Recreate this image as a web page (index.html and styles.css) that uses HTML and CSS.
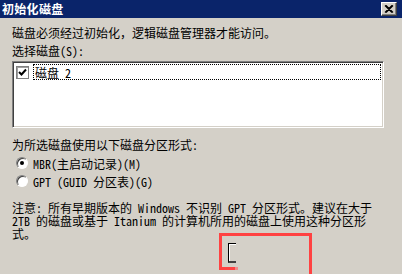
FILE: index.html
```html
<!DOCTYPE html>
<html lang="zh-CN">
<head>
<meta charset="utf-8">
<title>初始化磁盘</title>
<link rel="stylesheet" href="styles.css">
</head>
<body>
<div class="window">
  <div class="titlebar">
    <span class="title">初始化磁盘</span>
    <span class="close-btn">
      <svg width="10" height="8" viewBox="0 0 10 8"><path d="M1 0.5 L8 7.5 M2 0.5 L9 7.5 M8 0.5 L1 7.5 M9 0.5 L2 7.5" stroke="#000" stroke-width="1.2" fill="none"/></svg>
    </span>
  </div>
  <div class="content">
    <p class="line">磁盘必须经过初始化，逻辑磁盘管理器才能访问。</p>
    <p class="line">选择磁盘(S):</p>
    <div class="listbox">
      <div class="list-item">
        <span class="checkbox">
          <svg width="9" height="9" viewBox="0 0 9 9"><path d="M1 4 L3.5 6.5 L8 1.5" stroke="#000" stroke-width="2" fill="none"/></svg>
        </span>
        <span class="item-label">磁盘 2</span>
      </div>
    </div>
    <p class="line heading">为所选磁盘使用以下磁盘分区形式:</p>
    <div class="radio-row"><span class="radio checked"></span><span>MBR(主启动记录)(M)</span></div>
    <div class="radio-row"><span class="radio"></span><span>GPT (GUID 分区表)(G)</span></div>
    <p class="note">注意: 所有早期版本的 Windows 不识别 GPT 分区形式。建议在大于<br>2TB 的磁盘或基于 Itanium 的计算机所用的磁盘上使用这种分区形<br>式。</p>
    <div class="btn-row"><span class="mini-btn"></span></div>
  </div>
  <svg class="annot" width="93" height="41" viewBox="0 0 93 41">
    <rect x="0" y="0" width="3" height="37" fill="#ff4242"/>
    <rect x="0" y="0" width="93" height="3" fill="#ff4242"/>
    <rect x="90" y="0" width="3" height="41" fill="#ff4242"/>
    <rect x="0" y="34" width="16" height="3" fill="#ff4242"/>
    <rect x="16" y="34" width="3" height="3" fill="#f08a8a"/>
  </svg>
</div>
</body>
</html>
```
FILE: styles.css
```css
html, body {
  margin: 0;
  padding: 0;
  background: #d4d0c8;
}
.window {
  position: relative;
  width: 402px;
  height: 274px;
  overflow: hidden;
  background: #d4d0c8;
  font-family: "Noto Sans Mono CJK SC", "Noto Sans CJK SC", "Liberation Sans", sans-serif;
  font-size: 12px;
  color: #000;
}
.titlebar {
  height: 18px;
  background: #0a246a;
  display: flex;
  align-items: center;
  justify-content: space-between;
  padding: 0 5px 0 2px;
}
.title {
  color: #fff;
  font-weight: bold;
  font-size: 12px;
  line-height: 18px;
  letter-spacing: 0.3px;
}
.close-btn {
  width: 16px;
  height: 14px;
  box-sizing: border-box;
  background: #d4d0c8;
  border-top: 1px solid #fff;
  border-left: 1px solid #fff;
  border-right: 1px solid #404040;
  border-bottom: 1px solid #404040;
  box-shadow: inset -1px -1px #808080;
  display: flex;
  align-items: center;
  justify-content: center;
}
.content {
  padding: 6px 18px 0 12px;
}
.line {
  margin: 0;
  line-height: 18px;
  white-space: nowrap;
}
.listbox {
  margin-top: 1px;
  width: 372px;
  height: 67px;
  box-sizing: border-box;
  background: #fff;
  border-top: 1px solid #808080;
  border-left: 1px solid #808080;
  border-right: 1px solid #fff;
  border-bottom: 1px solid #fff;
  box-shadow: inset 1px 1px #404040, inset -1px -1px #d4d0c8;
  padding: 2px 2px 0 2px;
}
.list-item {
  display: flex;
  align-items: center;
  height: 16px;
  gap: 4px;
  padding-left: 1px;
}
.checkbox {
  width: 13px;
  height: 13px;
  box-sizing: border-box;
  border: 1px solid #808080;
  box-shadow: inset 1px 1px #a0a0a0;
  background: #fff;
  display: flex;
  align-items: center;
  justify-content: center;
  flex: none;
}
.item-label {
  flex: 1;
  height: 16px;
  line-height: 15px;
  box-sizing: border-box;
  border: 1px dotted #000;
  padding-left: 1px;
}
.heading {
  margin-top: 8px;
}
.radio-row {
  display: flex;
  align-items: center;
  gap: 5px;
  height: 18px;
  padding-left: 4px;
  white-space: nowrap;
}
.radio {
  position: relative;
  width: 12px;
  height: 12px;
  box-sizing: border-box;
  border-radius: 50%;
  background: #fff;
  border: 1px solid;
  border-color: #808080 #fff #fff #808080;
  box-shadow: inset 1px 1px #404040;
  flex: none;
}
.radio.checked::after {
  content: "";
  position: absolute;
  left: 3px;
  top: 3px;
  width: 4px;
  height: 4px;
  border-radius: 50%;
  background: #000;
}
.note {
  margin: 11px 0 0 0;
  line-height: 13px;
  white-space: nowrap;
}
.btn-row {
  margin-top: 3px;
  padding-left: 216px;
  height: 21px;
}
.mini-btn {
  display: block;
  width: 8px;
  height: 20px;
  box-sizing: border-box;
  border-top: 1px solid #000;
  border-left: 1px solid #000;
  border-bottom: 2px solid #404040;
  box-shadow: inset 1px 1px #fff;
  background: #d4d0c8;
}
.annot {
  position: absolute;
  left: 219px;
  top: 233px;
}
```
